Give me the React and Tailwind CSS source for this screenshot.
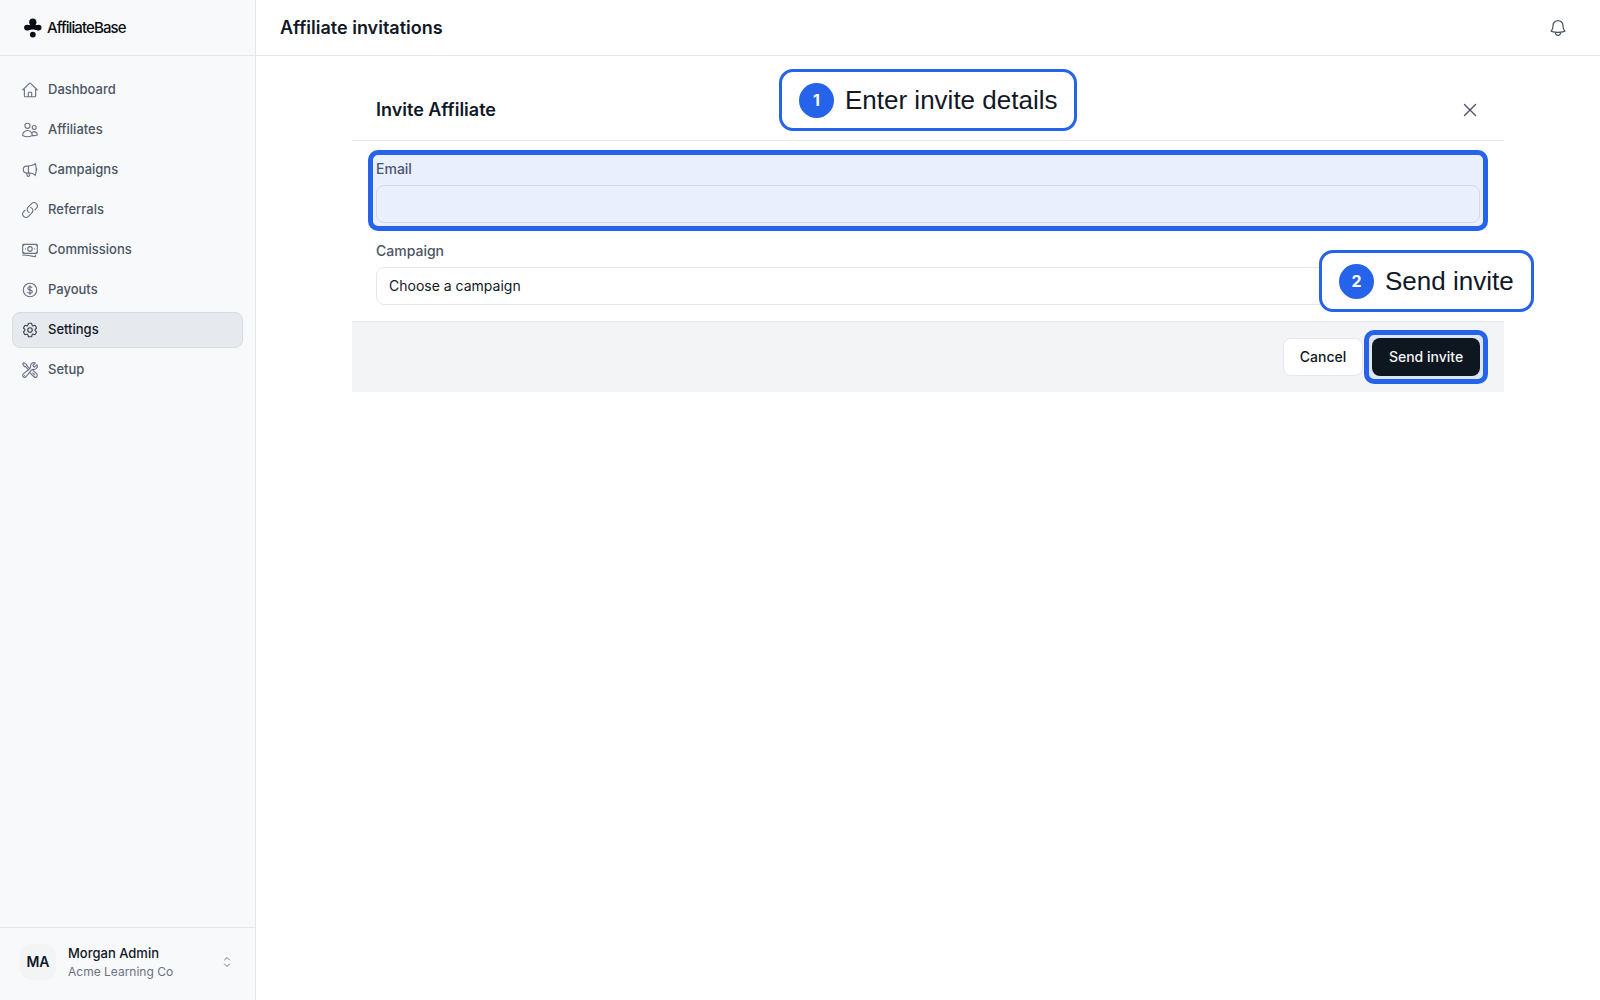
import React from "react";
import {
  HiOutlineHome, HiOutlineUsers, HiOutlineMegaphone, HiOutlineLink, HiOutlineBanknotes,
  HiOutlineCurrencyDollar, HiOutlineCog6Tooth, HiOutlineWrenchScrewdriver, HiOutlineBell,
  HiOutlineXMark, HiOutlineChevronUpDown,
} from "react-icons/hi2";

const nav = [
  ["Dashboard", HiOutlineHome],
  ["Affiliates", HiOutlineUsers],
  ["Campaigns", HiOutlineMegaphone],
  ["Referrals", HiOutlineLink],
  ["Commissions", HiOutlineBanknotes],
  ["Payouts", HiOutlineCurrencyDollar],
  ["Settings", HiOutlineCog6Tooth],
  ["Setup", HiOutlineWrenchScrewdriver],
];

function Logo() {
  return (
    <svg width="18" height="20" viewBox="0 0 18 20" fill="#0b0f14">
      <circle cx="8.8" cy="4.2" r="3.6" />
      <circle cx="3" cy="9.6" r="2.9" />
      <circle cx="14.6" cy="9.6" r="2.9" />
      <circle cx="8.8" cy="16.6" r="2.9" />
      <path d="M3 7 H14.6 V12.2 H13 C11 12.2 10.6 11.6 8.8 11.6 C7 11.6 6.6 12.2 4.6 12.2 H3 Z" />
    </svg>
  );
}

function Callout({ n, children, className }) {
  return (
    <div className={"absolute z-20 flex h-[62px] items-center gap-[11px] rounded-[14px] border-[3px] border-[#2563eb] bg-white px-[17px] whitespace-nowrap " + className}>
      <span className="flex h-[35px] w-[35px] shrink-0 items-center justify-center rounded-full bg-[#2563eb] text-[16px] font-bold text-white">{n}</span>
      <span className="text-[26px] leading-none text-[#111827] font-['Liberation_Sans',sans-serif]">{children}</span>
    </div>
  );
}

function Highlight({ className }) {
  return <div className={"pointer-events-none absolute z-10 border-[5px] border-[#2563eb] bg-[#2563eb]/10 " + className} />;
}

export default function App() {
  return (
    <div className="relative flex h-[1000px] w-[1600px] overflow-hidden bg-white font-['Inter',sans-serif] antialiased">
      <aside className="flex w-[256px] shrink-0 flex-col border-r border-[#e5e7eb] bg-[#f8f9fb]">
        <div className="flex h-[56px] shrink-0 items-center gap-[5px] border-b border-[#e5e7eb] px-[24px]">
          <Logo />
          <span className="mt-[2px] text-[15px] font-medium tracking-[-0.9px] text-[#0b0f14]">AffiliateBase</span>
        </div>
        <nav className="flex flex-1 flex-col gap-[4px] px-[12px] pt-[16px]">
          {nav.map(([label, Icon]) => {
            const active = label === "Settings";
            return (
              <div
                key={label}
                className={
                  active
                    ? "flex h-[36px] items-center gap-[9px] rounded-lg border border-[#d9dde3] bg-[#e6e9ee] px-[8px] text-[13px] font-medium text-[#111827]"
                    : "flex h-[36px] items-center gap-[9px] rounded-lg border border-transparent px-[8px] text-[13px] font-medium text-[#4b5563]"
                }
              >
                <Icon className={active ? "size-[18px] text-[#374151]" : "size-[18px] text-[#6b7280]"} />
                <span>{label}</span>
              </div>
            );
          })}
        </nav>
        <div className="h-[73px] shrink-0 border-t border-[#e5e7eb] px-[20px] pt-[16px]">
          <div className="flex h-[36px] items-center">
            <div className="flex size-[36px] items-center justify-center rounded-xl bg-[#f3f4f6] text-sm font-semibold text-[#111827]">MA</div>
            <div className="ml-[12px] flex-1">
              <div className="text-[13px] leading-[18px] font-medium text-[#111827]">Morgan Admin</div>
              <div className="mt-[1px] text-xs leading-[18px] text-[#6b7280]">Acme Learning Co</div>
            </div>
            <HiOutlineChevronUpDown className="size-[16px] text-[#6b7280]" />
          </div>
        </div>
      </aside>

      <main className="flex min-w-0 flex-1 flex-col">
        <header className="flex h-[56px] shrink-0 items-center justify-between border-b border-[#e5e7eb] pr-[32px] pl-[24px]">
          <h1 className="text-lg font-semibold text-[#111827]">Affiliate invitations</h1>
          <HiOutlineBell className="size-[20px] text-[#4b5563]" />
        </header>
        <section className="mx-auto w-[1152px]">
          <div className="flex h-[85px] items-center justify-between border-b border-[#e5e7eb] pt-[24px] pr-[23px] pl-[24px]">
            <h2 className="text-lg font-semibold text-[#111827]">Invite Affiliate</h2>
            <HiOutlineXMark className="size-[22px] text-[#4b5563]" />
          </div>
          <div className="flex flex-col gap-[16px] px-[24px] pt-[16px] pb-[16px]">
            <div className="relative">
              <Highlight className="-top-[7px] -right-[8px] -bottom-[8px] -left-[8px] rounded-[10px]" />
              <label className="block text-sm leading-[24px] font-medium text-[#4b5563]">Email</label>
              <div className="mt-[4px] h-[38px] rounded-lg border border-[#e5e7eb] bg-white" />
            </div>
            <div>
              <label className="block text-sm leading-[24px] font-medium text-[#4b5563]">Campaign</label>
              <div className="mt-[4px] flex h-[38px] items-center rounded-lg border border-[#e5e7eb] bg-white px-[12px] text-sm text-[#111827]">Choose a campaign</div>
            </div>
          </div>
          <div className="flex h-[71px] items-center justify-end gap-[9px] border-t border-[#e5e7eb] bg-[#f3f4f6] px-[24px]">
            <button className="h-[38px] w-[80px] rounded-lg border border-[#e5e7eb] bg-white text-sm font-medium text-[#111827]">Cancel</button>
            <div className="relative">
              <Highlight className="-inset-[8px] rounded-[10px]" />
              <button className="relative z-20 block h-[38px] w-[108px] rounded-lg bg-[#0e1720] text-sm font-medium text-[#f3f4f6]">Send invite</button>
            </div>
          </div>
        </section>
      </main>

      <Callout n="1" className="top-[69px] left-[779px] w-[298px]">Enter invite details</Callout>
      <Callout n="2" className="top-[250px] left-[1319px] w-[215px]">Send invite</Callout>
    </div>
  );
}
